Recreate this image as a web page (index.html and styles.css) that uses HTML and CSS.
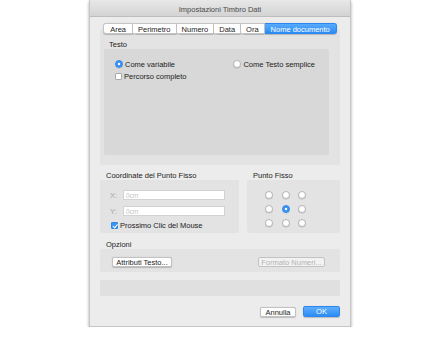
FILE: index.html
```html
<!DOCTYPE html>
<html lang="it">
<head>
	<meta charset="UTF-8">
	<title>Impostazioni Timbro Dati</title>
	<link rel="stylesheet" href="styles.css">
</head>
<body>
	<div class="window">
		<div class="titlebar">Impostazioni Timbro Dati</div>

		<div class="tabs">
			<span class="tab">Area</span>
			<span class="tab">Perimetro</span>
			<span class="tab">Numero</span>
			<span class="tab">Data</span>
			<span class="tab">Ora</span>
			<span class="tab selected">Nome documento</span>
		</div>

		<div class="tab-panel">
			<div class="group-label">Testo</div>
			<div class="testo-box">
				<div class="row">
					<label class="option"><span class="radio on"></span>Come variabile</label>
					<label class="option right"><span class="radio"></span>Come Testo semplice</label>
				</div>
				<label class="option"><span class="check"></span>Percorso completo</label>
			</div>
		</div>

		<div class="split">
			<div class="coord">
				<div class="section-label">Coordinate del Punto Fisso</div>
				<div class="box coord-box">
					<div class="field"><span class="axis">X:</span><span class="input">0cm</span></div>
					<div class="field"><span class="axis">Y:</span><span class="input">0cm</span></div>
					<label class="option"><span class="check on"></span>Prossimo Clic del Mouse</label>
				</div>
			</div>
			<div class="anchor">
				<div class="section-label">Punto Fisso</div>
				<div class="box anchor-box">
					<div class="grid">
						<span class="radio"></span><span class="radio"></span><span class="radio"></span>
						<span class="radio"></span><span class="radio on"></span><span class="radio"></span>
						<span class="radio"></span><span class="radio"></span><span class="radio"></span>
					</div>
				</div>
			</div>
		</div>

		<div class="section-label opzioni-label">Opzioni</div>
		<div class="box opzioni-box">
			<button class="btn attr">Attributi Testo...</button>
			<button class="btn" disabled>Formato Numeri...</button>
		</div>

		<div class="box empty-box"></div>

		<div class="actions">
			<button class="btn cancel">Annulla</button>
			<button class="btn primary">OK</button>
		</div>
	</div>
</body>
</html>
```

FILE: styles.css
```css
body {
	margin: 0;
	background-color: #ffffff;
	font-family: 'Liberation Sans', Arial, sans-serif;
	font-size: 7.5px;
	color: #222;
}

.window {
	margin-left: 89px;
	width: 262px;
	height: 327px;
	box-sizing: border-box;
	background-color: #ececec;
	border: 1px solid #c6c6c6;
	border-top: none;
	box-shadow: 0 2px 3px rgba(0, 0, 0, 0.35);
	display: flex;
	flex-direction: column;
}

.titlebar {
	height: 17px;
	line-height: 19px;
	text-align: center;
	color: #4a4a4a;
	background: linear-gradient(#e8e8e8, #d3d3d3);
	border-bottom: 1px solid #bdbdbd;
	box-sizing: border-box;
}

.tabs {
	display: flex;
	justify-content: center;
	margin-top: 6px;
	margin-bottom: -5px;
	position: relative;
	z-index: 1;
}

.tab {
	height: 11px;
	line-height: 11px;
	padding: 0 5px;
	background-color: #fff;
	border: 1px solid #c4c4c4;
	border-left: none;
	box-sizing: border-box;
	box-shadow: 0 0.5px 1px rgba(0, 0, 0, 0.2);
}

.tab:first-child {
	border-left: 1px solid #c4c4c4;
	border-radius: 3px 0 0 3px;
	padding: 0 6px;
}

.tab.selected {
	background: linear-gradient(#58abfc, #2c8cf5);
	border-color: #2c88ee;
	color: #fff;
	border-radius: 0 3px 3px 0;
	padding: 0 6px;
}

.tab-panel {
	margin: 0 10px;
	height: 136px;
	box-sizing: border-box;
	padding: 12px 11px 10px 4px;
	background-color: #e3e3e3;
	border-radius: 2px;
}

.group-label {
	height: 8px;
	line-height: 8px;
	padding-left: 5px;
}

.testo-box {
	height: 106px;
	box-sizing: border-box;
	background-color: #d8d8d8;
	border-radius: 2px;
	padding: 11px 11px;
}

.row {
	display: flex;
	margin-bottom: 4px;
}

.option {
	display: flex;
	align-items: center;
	height: 8px;
	gap: 2px;
	white-space: nowrap;
}

.option.right {
	margin-left: auto;
	margin-right: 3px;
}

.radio {
	display: inline-block;
	width: 8px;
	height: 8px;
	box-sizing: border-box;
	border-radius: 50%;
	background-color: #fff;
	border: 0.5px solid #b7b7b7;
	box-shadow: 0 0.5px 0.5px rgba(0, 0, 0, 0.15);
}

.radio.on {
	background: radial-gradient(circle, #fff 0, #fff 1.2px, #3a95f7 1.6px);
	border-color: #2f86ea;
}

.check {
	display: inline-block;
	width: 7px;
	height: 7px;
	box-sizing: border-box;
	background-color: #fff;
	border: 0.5px solid #a9a9a9;
	border-radius: 1px;
	position: relative;
}

.check.on {
	background-color: #3a95f7;
	border-color: #2f86ea;
}

.check.on::after {
	content: "";
	position: absolute;
	left: 2px;
	top: 0.5px;
	width: 1.5px;
	height: 3.5px;
	border: solid #fff;
	border-width: 0 1px 1px 0;
	transform: rotate(40deg);
}

.split {
	display: flex;
	margin: 6px 10px 0 10px;
	gap: 8px;
}

.section-label {
	height: 9px;
	line-height: 9px;
	padding-left: 6px;
}

.box {
	background-color: #e3e3e3;
	border-radius: 2px;
}

.coord {
	width: 139px;
}

.coord-box {
	height: 53px;
	box-sizing: border-box;
	padding: 10px 0 0 10px;
}

.field {
	display: flex;
	align-items: center;
	height: 10px;
	margin-bottom: 6px;
	color: #a8a8a8;
}

.axis {
	width: 13px;
}

.input {
	width: 102px;
	height: 10px;
	line-height: 10px;
	box-sizing: border-box;
	padding-left: 2px;
	background-color: #fff;
	border: 0.5px solid #d2d2d2;
	color: #c4c4c4;
	font-size: 6.5px;
}

.coord-box .option {
	margin-top: -1px;
	margin-left: 1px;
}

.anchor {
	flex: 1;
}

.anchor-box {
	height: 53px;
	box-sizing: border-box;
	padding: 11px 0 0 18px;
}

.grid {
	display: grid;
	grid-template-columns: repeat(3, 8px);
	column-gap: 8.5px;
	row-gap: 6px;
}

.opzioni-label {
	margin: 7px 10px 0 10px;
	padding-left: 6px;
}

.opzioni-box {
	margin: 0 10px;
	height: 23px;
	box-sizing: border-box;
	padding: 8px 15px 0 12px;
	display: flex;
	justify-content: space-between;
	align-items: flex-start;
}

.btn {
	font-family: inherit;
	font-size: 7.5px;
	color: #222;
	height: 10px;
	line-height: 9px;
	padding: 0;
	white-space: nowrap;
	text-align: center;
	background-color: #fff;
	border: 0.5px solid #c2c2c2;
	border-radius: 2px;
	box-shadow: 0 0.5px 1px rgba(0, 0, 0, 0.2);
}

.btn:disabled {
	color: #b3b3b3;
	background-color: #f2f2f2;
	box-shadow: none;
	width: 67px;
}

.attr {
	width: 60px;
}

.empty-box {
	margin: 8px 10px 0 10px;
	height: 16px;
	background-color: #e0e0e0;
}

.actions {
	display: flex;
	justify-content: flex-end;
	align-items: center;
	gap: 7px;
	margin: 10px 10px 0 0;
}

.cancel {
	width: 36px;
	height: 10px;
}

.primary {
	width: 37px;
	height: 11px;
	color: #fff;
	background: linear-gradient(#5eaefc, #2c8cf5);
	border-color: #2c88ee;
}
```
